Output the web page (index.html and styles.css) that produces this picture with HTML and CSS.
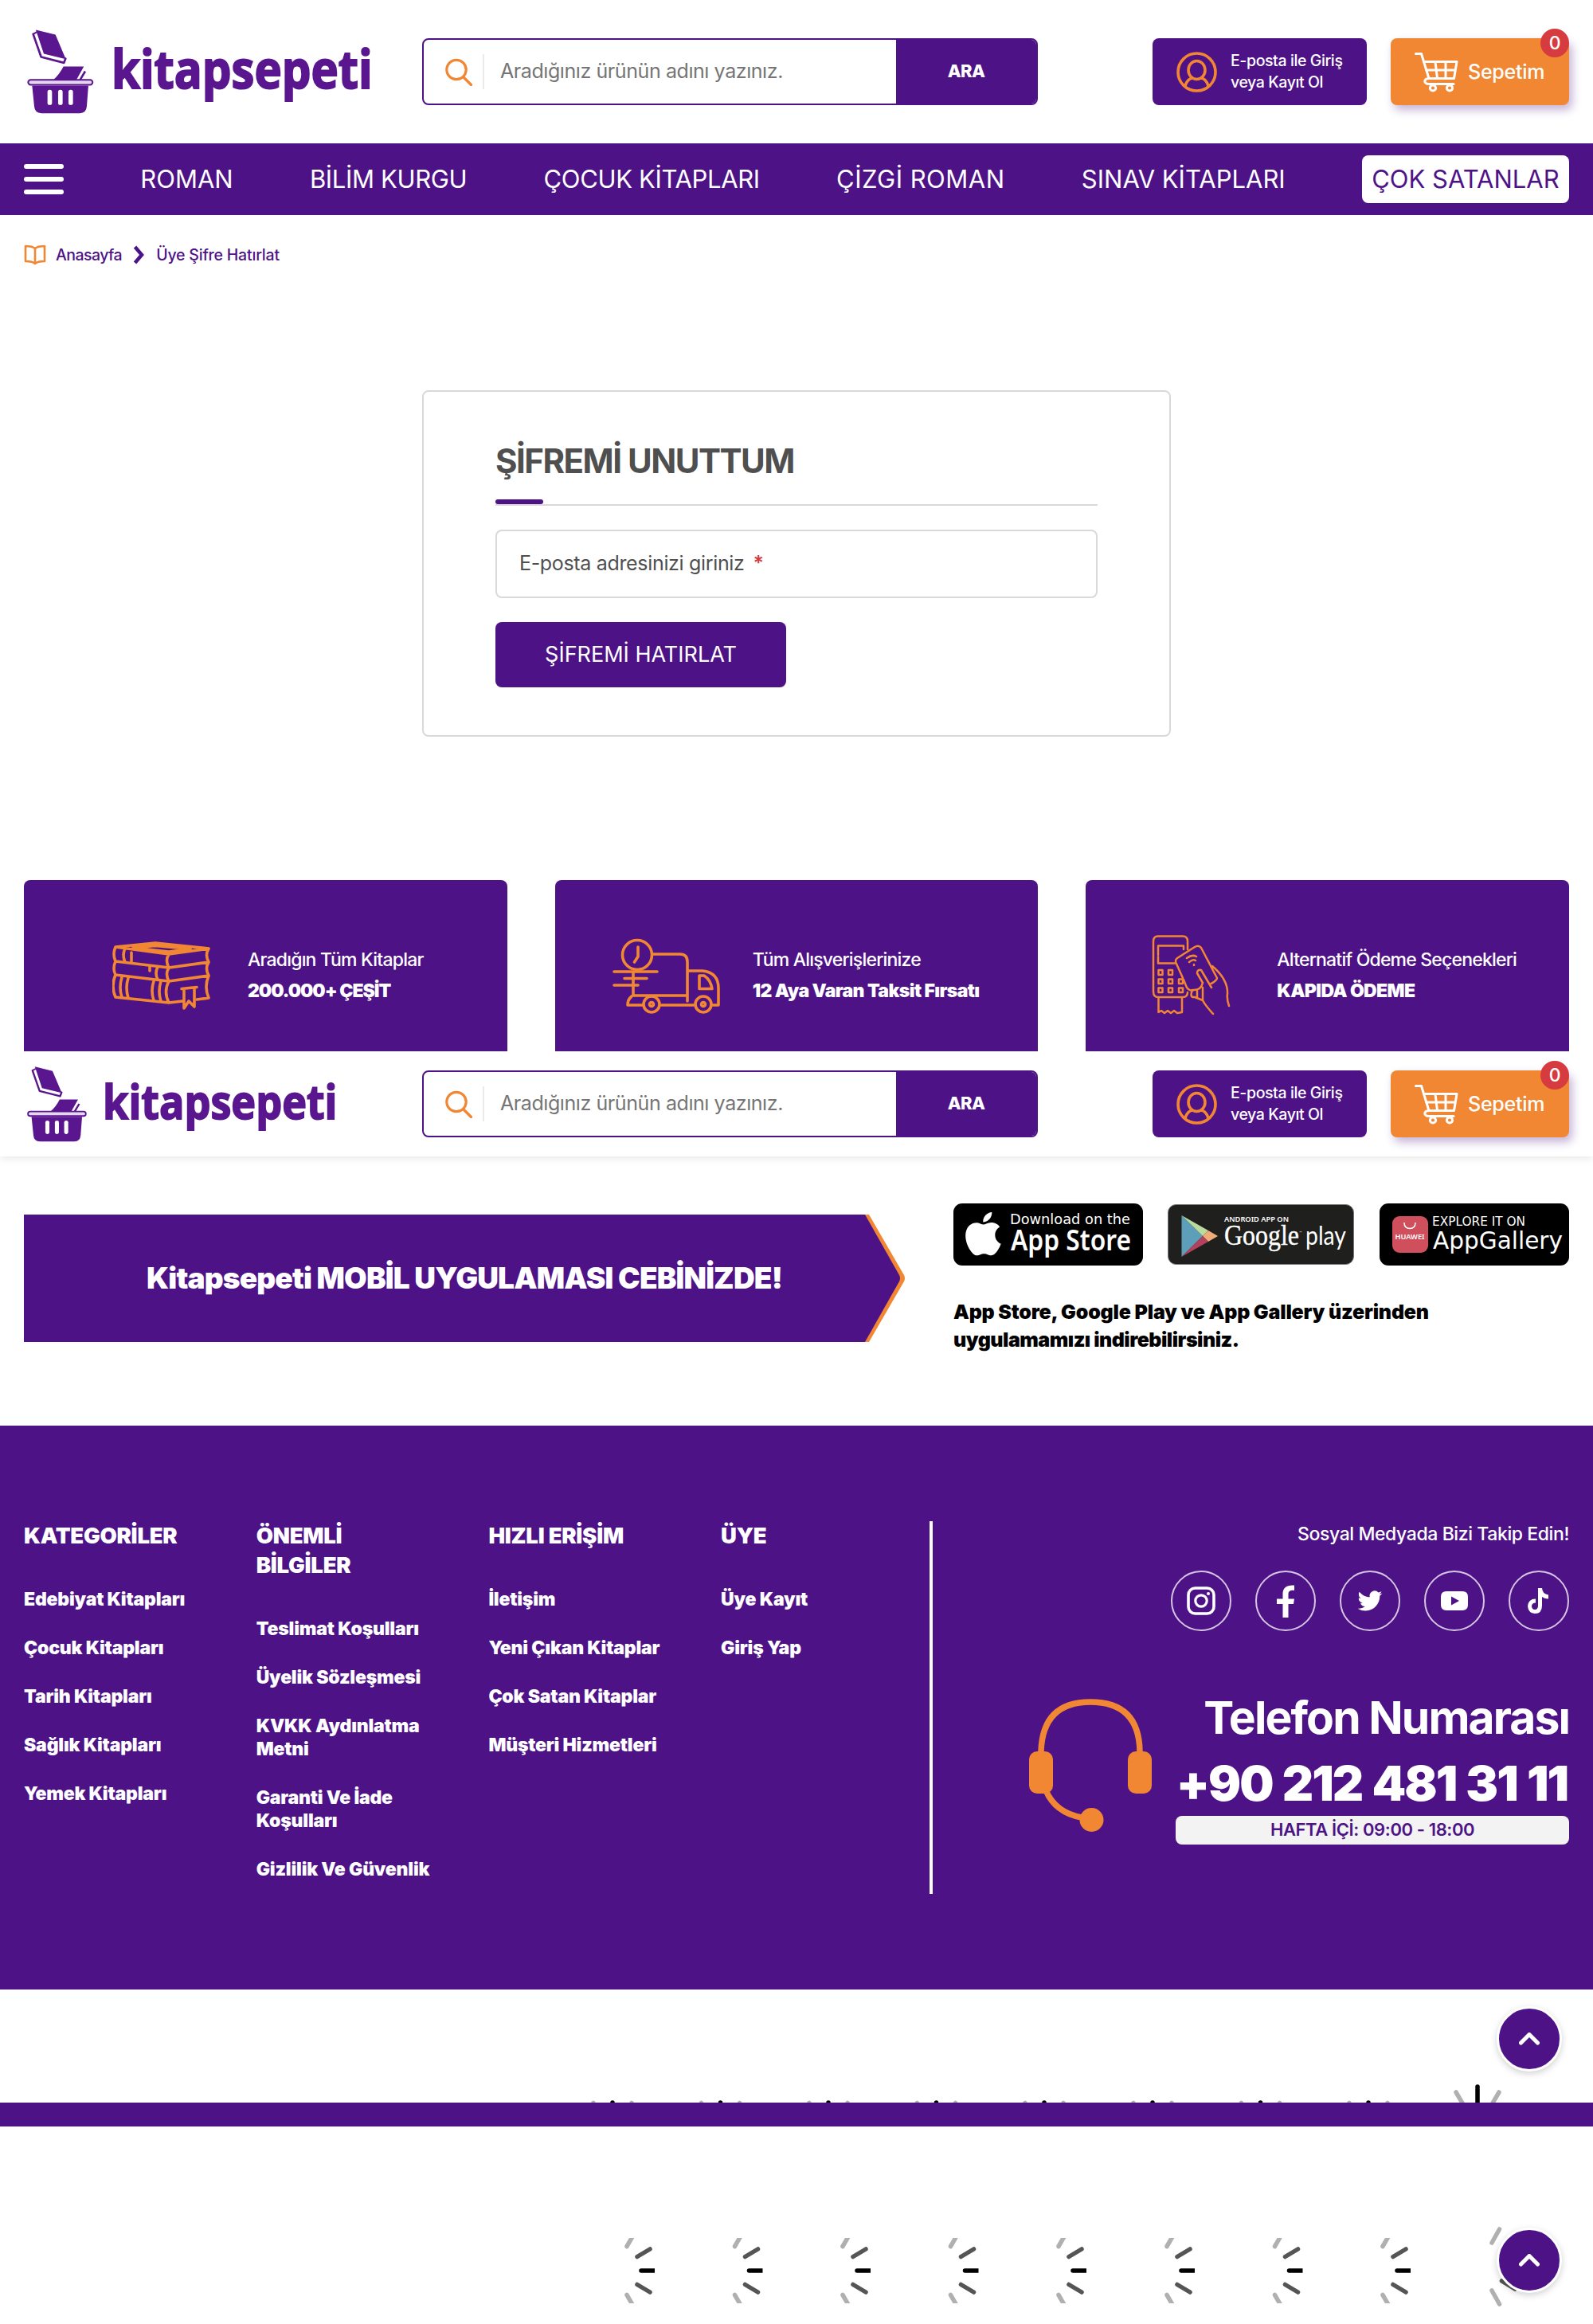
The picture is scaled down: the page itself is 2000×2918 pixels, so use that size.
FILE: index.html
```html
<!DOCTYPE html>
<html lang="tr">
<head>
<meta charset="utf-8">
<title>Üye Şifre Hatırlat - Kitapsepeti</title>
<link rel="stylesheet" href="styles.css">
</head>
<body>
<svg class="defs" aria-hidden="true">
  <symbol id="logo" viewBox="40 48 1300 320">
    <path d="M76 52L150 70L189 162L106 142Z"/>
    <path d="M66 68L96 154L182 176L188 160" fill="none" stroke="currentColor" stroke-width="8" stroke-linejoin="round" stroke-linecap="round"/>
    <path d="M66 68L80 60" stroke="currentColor" stroke-width="6"/>
    <path d="M180 190H257L229 240H142Q165 220 180 190Z"/>
    <path d="M262 208L243 240" stroke="currentColor" stroke-width="8"/>
    <rect x="47" y="240" width="243" height="19" rx="9.500" fill="#e4d6ee" stroke="currentColor" stroke-width="6"/>
    <path d="M62 262H274L268 340Q266 366 242 366H97Q72 366 70 340Z"/>
    <rect x="120" y="278" width="17" height="57" rx="8" fill="#fff"/>
    <rect x="160" y="278" width="17" height="57" rx="8" fill="#fff"/>
    <rect x="199" y="278" width="17" height="57" rx="8" fill="#fff"/>
    <text x="361" y="273" textLength="984" lengthAdjust="spacingAndGlyphs" class="logo-text">kitapsepeti</text>
  </symbol>
  <symbol id="search" viewBox="558 71 36 36">
    <circle cx="573" cy="86.500" r="12.200"/><path d="M582 96L591.500 105.500"/>
  </symbol>
  <symbol id="user" viewBox="1477 64 51 51">
    <circle cx="1502.500" cy="89.500" r="23.500"/><ellipse cx="1502.500" cy="87" rx="10.500" ry="11.500"/><path d="M1488 107Q1491 97 1498 97M1517 107Q1514 97 1507 97"/>
  </symbol>
  <symbol id="cart" viewBox="1775 63 56 52">
    <path d="M1777.500 66.500H1784.500L1794 97.500H1825.500L1829 76.500H1788M1802 77L1804.500 97M1815 77V97M1790.500 87H1827M1794 97.500Q1788 98 1789 102Q1790 104.500 1794 104.500H1825"/>
    <circle cx="1799" cy="109.500" r="3.600"/><circle cx="1820" cy="109.500" r="3.600"/>
  </symbol>
  <symbol id="up" viewBox="0 0 26 16"><path d="M2.500 13L13 2.500L23.500 13"/></symbol>
</svg>

<header class="header">
  <svg class="logo"><use href="#logo"/></svg>
  <form class="search">
    <svg class="search-icon"><use href="#search"/></svg>
    <span class="search-hint">Aradığınız ürünün adını yazınız.</span>
    <span class="search-btn">ARA</span>
  </form>
  <div class="actions">
    <a class="login"><svg><use href="#user"/></svg><span>E-posta ile Giriş<br>veya Kayıt Ol</span></a>
    <a class="cart"><svg><use href="#cart"/></svg><span>Sepetim</span><b class="badge">0</b></a>
  </div>
</header>

<nav class="nav">
  <span class="burger"><i></i><i></i><i></i></span>
  <a>ROMAN</a><a class="tight">BİLİM KURGU</a><a class="tight">ÇOCUK KİTAPLARI</a><a class="wide">ÇİZGİ ROMAN</a><a>SINAV KİTAPLARI</a><a class="hot">ÇOK SATANLAR</a>
</nav>

<main class="main">
  <div class="crumbs">
    <svg class="crumb-book" viewBox="0 0 28 26"><path d="M14 5Q11 2 2 2V21Q11 21 14 24Q17 21 26 21V2Q17 2 14 5ZM14 5V24"/></svg>
    <a class="home">Anasayfa</a>
    <svg class="crumb-arrow" viewBox="0 0 14 24"><path d="M2.500 2L11 12L2.500 22"/></svg>
    <a>Üye Şifre Hatırlat</a>
  </div>
  <section class="card">
    <h1>ŞİFREMİ UNUTTUM</h1>
    <div class="field"><span>E-posta adresinizi giriniz</span><em>*</em></div>
    <span class="submit">ŞİFREMİ HATIRLAT</span>
  </section>
</main>

<section class="features">
  <div class="feature f-books">
    <svg viewBox="141 1180 124 90">
      <path d="M145 1189L195 1184L262 1191L212 1198ZM167 1190L195 1187.500L239 1191.500L212 1195ZM145 1189Q141 1198 145 1207L212 1215L262 1208Q257 1199 262 1191M212 1198Q207 1206 212 1215M145 1207Q141 1216 145 1224L212 1232L262 1225Q257 1216 262 1208M212 1215Q207 1223 212 1232M145 1224Q139 1238 145 1252L212 1259L229 1257M247 1255L262 1253Q256 1239 262 1225M212 1232Q205 1245 212 1259"/>
      <path d="M157 1191Q153 1199 157 1208M165 1196V1207M188 1214V1219M198 1214Q194 1222 198 1230M153 1227Q149 1240 153 1252M161 1228Q157 1240 161 1253M193 1232Q189 1244 193 1256M202 1232Q198 1245 202 1257M228 1241.500L247 1239.500M231 1242V1266L237 1257L244 1264V1240"/>
    </svg>
    <p>Aradığın Tüm Kitaplar<b>200.000+ ÇEŞİT</b></p>
  </div>
  <div class="feature f-truck">
    <svg viewBox="768 1176 138 96">
      <circle cx="800" cy="1198" r="18.500"/><path d="M801 1188V1200L796.500 1207M771 1219H825M784 1227.500H812M771 1236H801M820 1197H854Q863 1197 863 1207V1256M795 1219V1249H863M793 1250Q788 1254 788 1261H807M830 1261H871M863 1218H882Q902 1220 902 1240V1261H895M878 1224H884Q892 1229 894 1240.500H878Z"/>
      <circle cx="818" cy="1260" r="10"/><circle cx="818" cy="1260" r="2.500"/><circle cx="883" cy="1260" r="10"/><circle cx="883" cy="1260" r="2.500"/>
    </svg>
    <p>Tüm Alışverişlerinize<b>12 Aya Varan Taksit Fırsatı</b></p>
  </div>
  <div class="feature f-pay">
    <svg viewBox="1445 1173 101 103">
      <path d="M1491 1192V1182Q1491 1175.500 1485 1175.500H1454Q1448 1175.500 1448 1182V1245Q1448 1252 1454 1252H1485Q1491 1252 1491 1246M1454 1199V1187.500H1486V1192M1454 1201V1209.500H1475M1454.500 1253V1271L1458 1269L1462 1272L1466 1269L1470 1272L1474 1269L1478 1272L1484 1271V1253"/>
      <path d="M1454.500 1218H1459.500V1224H1454.500ZM1467 1218H1472V1224H1467ZM1454.500 1229.500H1459.500V1235H1454.500ZM1467 1229.500H1472V1235H1467ZM1480 1229.500H1485V1235H1480ZM1454.500 1240.500H1459.500V1246H1454.500ZM1467 1240.500H1472V1246H1467ZM1480 1240.500H1485V1246H1480Z"/>
      <path d="M1485 1228L1476.500 1209Q1475 1205 1478 1203L1500 1189Q1505 1186 1508 1190L1528 1228Q1528 1231 1519 1236M1486 1230L1490 1240Q1494 1245 1499 1243Q1508 1243 1510 1234L1503 1222Q1503 1217 1508 1218L1521 1240M1522 1213Q1542 1230 1541 1248Q1540 1254 1543 1263M1497 1243Q1493 1253 1500 1252L1510 1256Q1513 1262 1523 1273M1503 1244V1252M1510 1240V1256M1490 1203Q1497 1198 1502 1201M1493 1208Q1498 1204 1501 1206M1499 1211V1212"/>
    </svg>
    <p>Alternatif Ödeme Seçenekleri<b>KAPIDA ÖDEME</b></p>
  </div>
</section>

<header class="header sticky">
  <svg class="logo"><use href="#logo"/></svg>
  <form class="search">
    <svg class="search-icon"><use href="#search"/></svg>
    <span class="search-hint">Aradığınız ürünün adını yazınız.</span>
    <span class="search-btn">ARA</span>
  </form>
  <div class="actions">
    <a class="login"><svg><use href="#user"/></svg><span>E-posta ile Giriş<br>veya Kayıt Ol</span></a>
    <a class="cart"><svg><use href="#cart"/></svg><span>Sepetim</span><b class="badge">0</b></a>
  </div>
</header>

<section class="apps">
  <div class="banner">
    <div class="banner-text"><span>Kitapsepeti MOBİL UYGULAMASI CEBİNİZDE!</span></div>
    <svg class="banner-tip" viewBox="0 0 50 160"><path d="M0 0H5L49 76Q51 80 49 84L5 160H0Z" fill="#f18733"/><path d="M0 0L43 76Q45 80 43 84L0 160Z" fill="#4e1287"/></svg>
  </div>
  <div class="stores">
    <div class="store-row">
      <svg width="238" height="78" viewBox="1197 1511 238 78">
        <rect x="1197" y="1511" width="238" height="78" rx="11"/>
        <g transform="translate(1208 1520.500) scale(2.420)"><path fill="#fff" d="M17.050 12.540c-.03-2.850 2.330-4.220 2.430-4.280-1.320-1.940-3.380-2.200-4.120-2.230-1.750-.18-3.420 1.030-4.310 1.030-.89 0-2.260-1.010-3.710-.98-1.910.03-3.670 1.110-4.660 2.820-1.980 3.440-.51 8.540 1.420 11.330.95 1.370 2.080 2.900 3.560 2.850 1.430-.06 1.970-.92 3.700-.92 1.720 0 2.210.92 3.720.89 1.540-.03 2.510-1.390 3.450-2.770 1.090-1.590 1.530-3.130 1.560-3.210-.03-.01-2.990-1.150-3.040-4.530zM14.210 4.170c.79-.95 1.320-2.280 1.170-3.600-1.130.05-2.500.75-3.310 1.700-.73.84-1.370 2.190-1.200 3.490 1.270.1 2.550-.64 3.340-1.590z"/></g>
        <text x="1268" y="1537" textLength="151" lengthAdjust="spacingAndGlyphs" class="st dj" font-size="17">Download on the</text>
        <text x="1269" y="1569.500" textLength="151" lengthAdjust="spacingAndGlyphs" class="st no" font-size="36">App Store</text>
      </svg>
      <svg class="play" width="234" height="76" viewBox="1466 1512 234 76">
        <rect x="1466.500" y="1512.500" width="233" height="75" rx="10" fill="#1f1f1d" stroke="#777"/>
        <path d="M1483.500 1526L1510 1552L1483.500 1578Z" fill="#5d9fb9"/><path d="M1483.500 1526L1517 1545L1510 1552Z" fill="#b9dba0"/><path d="M1517 1545L1529 1552L1517 1559L1510 1552Z" fill="#efab78"/><path d="M1510 1552L1517 1559L1483.500 1578Z" fill="#b4425c"/>
        <text x="1537" y="1534" textLength="81" lengthAdjust="spacingAndGlyphs" class="st nb" font-size="9.500">ANDROID APP ON</text>
        <text x="1537" y="1563" textLength="94" lengthAdjust="spacingAndGlyphs" class="st se" font-size="35">Google</text>
        <text x="1631" y="1549" font-size="4" class="st dj">™</text>
        <text x="1639" y="1563" textLength="51" lengthAdjust="spacingAndGlyphs" class="st la" font-size="32">play</text>
      </svg>
      <svg width="238" height="78" viewBox="1732 1511 238 78">
        <rect x="1732" y="1511" width="238" height="78" rx="11"/>
        <rect x="1748" y="1527" width="45" height="46" rx="9" fill="#cf505c"/>
        <path d="M1763 1535Q1763 1542.500 1770 1542.500Q1777 1542.500 1777 1535" fill="none" stroke="#fff" stroke-width="1.500"/>
        <text x="1751.500" y="1556" textLength="37" lengthAdjust="spacingAndGlyphs" class="st nb" font-size="9">HUAWEI</text>
        <text x="1798" y="1539" textLength="117" lengthAdjust="spacingAndGlyphs" class="st dj" font-size="15.500">EXPLORE IT ON</text>
        <text x="1799" y="1568" textLength="163" lengthAdjust="spacingAndGlyphs" class="st dj" font-size="30">AppGallery</text>
      </svg>
    </div>
    <p><span>App Store, Google Play ve App Gallery üzerinden</span><br><span class="second">uygulamamızı indirebilirsiniz.</span></p>
  </div>
</section>

<footer class="footer">
  <div class="col"><h2>KATEGORİLER</h2><a>Edebiyat Kitapları</a><a>Çocuk Kitapları</a><a>Tarih Kitapları</a><a>Sağlık Kitapları</a><a>Yemek Kitapları</a></div>
  <div class="col"><h2>ÖNEMLİ<br>BİLGİLER</h2><a>Teslimat Koşulları</a><a>Üyelik Sözleşmesi</a><a>KVKK Aydınlatma<br>Metni</a><a>Garanti Ve İade<br>Koşulları</a><a>Gizlilik Ve Güvenlik</a></div>
  <div class="col"><h2>HIZLI ERİŞİM</h2><a>İletişim</a><a>Yeni Çıkan Kitaplar</a><a>Çok Satan Kitaplar</a><a>Müşteri Hizmetleri</a></div>
  <div class="col"><h2>ÜYE</h2><a>Üye Kayıt</a><a>Giriş Yap</a></div>
  <div class="contact">
    <p class="follow">Sosyal Medyada Bizi Takip Edin!</p>
    <div class="social">
      <a><svg viewBox="0 0 36 36"><rect x="2" y="2" width="32" height="32" rx="8.500" fill="none" stroke="#fff" stroke-width="3.600"/><circle cx="18" cy="18" r="7.200" fill="none" stroke="#fff" stroke-width="3.200"/><circle cx="27" cy="9" r="2"/></svg></a>
      <a><svg viewBox="0 0 36 36"><path d="M14.500 39V22H7V15.500H14.500V9Q14.500 -2.500 29 -1.500V5Q21.500 4 21.500 9.500V15.500H29L28 22H21.500V39Z"/></svg></a>
      <a><svg viewBox="-2 -2 28 28"><path d="M23.950 4.570a10 10 0 0 1-2.820.77 4.960 4.960 0 0 0 2.160-2.720c-.95.550-2 .950-3.120 1.180a4.920 4.920 0 0 0-8.380 4.480C7.690 8.090 4.070 6.130 1.640 3.160a4.820 4.820 0 0 0-.66 2.480c0 1.710.87 3.210 2.190 4.100a4.900 4.900 0 0 1-2.230-.62v.06a4.920 4.920 0 0 0 3.950 4.830 5 5 0 0 1-2.210.08 4.940 4.940 0 0 0 4.600 3.420A9.870 9.870 0 0 1 0 19.540a13.990 13.990 0 0 0 7.550 2.210c9.050 0 14-7.500 14-13.980 0-.21 0-.42-.02-.63a9.940 9.940 0 0 0 2.460-2.550z"/></svg></a>
      <a><svg viewBox="0 0 36 36"><path fill-rule="evenodd" d="M8 6H28Q35 6 35 13V23Q35 30 28 30H8Q1 30 1 23V13Q1 6 8 6ZM14 12.500V23.500L24 18Z"/></svg></a>
      <a><svg viewBox="0 0 36 36"><path d="M17 2H22Q22.500 9.500 30 10.500V15.500Q25.500 15.500 22 13V24Q22 34 13 34Q5 33.500 4 25Q4.500 15.500 14 15.500V20.500Q9 20.500 9 25Q9.500 29 13 29Q17 29 17 24Z"/></svg></a>
    </div>
    <div class="phone">
      <svg viewBox="1291 2132 156 169"><path d="M1307 2203V2199Q1309 2137 1369 2137Q1430 2137 1431 2199V2203M1313 2248Q1325 2276 1358 2282" fill="none" stroke="#f18733" stroke-width="7.500"/><rect x="1292" y="2199" width="30" height="53" rx="10"/><rect x="1416" y="2199" width="30" height="53" rx="10"/><circle cx="1370.500" cy="2285" r="15"/></svg>
      <div class="phone-text">
        <span class="phone-label">Telefon Numarası</span>
        <span class="phone-number">+90 212 481 31 11</span>
        <span class="hours">HAFTA İÇİ: 09:00 - 18:00</span>
      </div>
    </div>
  </div>
</footer>

<section class="strip">
  <svg class="spin-row" viewBox="0 2498 2000 142">
    <defs>
      <g id="top-small"><path d="M53 2640V2650" stroke="#000"/><path d="M29 2640.500L36 2653M77 2640.500L70 2653" stroke="#b0b0b0"/></g>
    </defs>
    <use href="#top-small" x="716"/><use href="#top-small" x="851.500"/><use href="#top-small" x="987"/><use href="#top-small" x="1122.500"/><use href="#top-small" x="1258"/><use href="#top-small" x="1394"/><use href="#top-small" x="1529.500"/><use href="#top-small" x="1665"/>
    <path d="M1855 2620V2650" stroke="#000"/><path d="M1828 2627L1838 2644M1882 2627L1872 2644" stroke="#b0b0b0"/>
  </svg>
  <span class="to-top"><svg><use href="#up"/></svg></span>
</section>
<div class="bar"></div>
<section class="strip loaders">
  <svg class="spin-row" viewBox="0 2670 2000 248">
    <defs>
      <clipPath id="cell"><rect x="0" y="2810" width="106" height="82"/></clipPath>
      <g id="side-small" clip-path="url(#cell)"><path d="M89 2851H112" stroke="#000"/><path d="M84 2833.500L100 2824M84 2868.500L100 2878" stroke="#555"/><path d="M71 2820.500L80 2805M71 2881.500L80 2897" stroke="#b0b0b0"/></g>
    </defs>
    <use href="#side-small" x="716"/><use href="#side-small" x="851.500"/><use href="#side-small" x="987"/><use href="#side-small" x="1122.500"/><use href="#side-small" x="1258"/><use href="#side-small" x="1394"/><use href="#side-small" x="1529.500"/><use href="#side-small" x="1665"/>
    <path d="M1873 2816L1882.500 2799M1873 2876L1882.500 2893" stroke="#b0b0b0"/><path d="M1885.500 2864L1902 2874" stroke="#555"/>
  </svg>
  <span class="to-top"><svg><use href="#up"/></svg></span>
</section>
</body>
</html>
```
FILE: styles.css
```css
* { box-sizing: border-box; }
body { margin: 0; width: 2000px; background: #fff; font-family: Inter, "Liberation Sans", sans-serif; color: #4f4f4f; }
p, h1, h2 { margin: 0; }
.defs { position: absolute; width: 0; height: 0; }

.header { display: grid; grid-template-columns: 500px 773px 1fr; height: 180px; padding: 48px 30px 0; background: #fff; }
.logo { width: 433px; height: 107px; margin: -12px 0 0 3px; color: #5a168e; fill: #5a168e; }
.logo-text { font-family: "Open Sans", sans-serif; font-weight: 700; font-size: 197px; stroke: #5a168e; stroke-width: 6px; }
.search { display: flex; align-items: center; height: 84px; border: 2px solid #4e1287; border-radius: 8px; overflow: hidden; }
.search-icon { width: 36px; height: 36px; margin-left: 26px; fill: none; stroke: #f18733; stroke-width: 3.200; stroke-linecap: round; }
.search-hint { flex: 1; height: 44px; margin-left: 12px; padding-left: 20px; border-left: 2px solid #eaeaea; font-size: 25px; line-height: 43px; letter-spacing: -.42px; color: #757575; }
.search-btn { width: 176px; height: 84px; background: #4e1287; color: #fff; font-size: 22px; font-weight: 800; line-height: 82px; letter-spacing: -.7px; text-align: center; }
.actions { display: flex; justify-content: flex-end; gap: 30px; color: #fff; }
.login, .cart { display: flex; align-items: center; height: 84px; border-radius: 8px; font-weight: 500; }
.login { width: 269px; padding-left: 30px; gap: 17px; background: #4e1287; font-size: 19.500px; line-height: 27px; letter-spacing: -.4px; white-space: nowrap; }
.login svg { width: 51px; height: 51px; fill: none; stroke: #f18733; stroke-width: 3.600; }
.cart { position: relative; width: 224px; padding-left: 29px; gap: 12px; background: #f18733; font-size: 25px; letter-spacing: -.25px; box-shadow: 4px 6px 12px rgba(78, 18, 135, .32); }
.cart svg { width: 56px; height: 52px; fill: none; stroke: #fff; stroke-width: 3; stroke-linejoin: round; stroke-linecap: round; }
.badge { position: absolute; top: -12px; right: 0; width: 36px; height: 36px; border-radius: 50%; background: #d53b3f; font-size: 23px; font-weight: 500; line-height: 36px; text-align: center; }

.nav { display: flex; align-items: center; justify-content: space-between; height: 90px; padding: 0 30px; background: #4e1287; color: #fff; font-size: 31px; line-height: 60px; letter-spacing: 0; white-space: nowrap; }
.nav .tight { letter-spacing: -.35px; }
.nav .wide { letter-spacing: .5px; }
.burger { display: grid; gap: 10px; width: 50px; }
.burger i { height: 6px; border-radius: 3px; background: #fff; }
.hot { width: 260px; border-radius: 8px; background: #fff; color: #4e1287; text-align: center; }

.main { height: 835px; padding: 30px 30px 0; }
.crumbs { display: flex; align-items: center; height: 40px; color: #4e1287; font-size: 19.500px; font-weight: 500; letter-spacing: -.2px; white-space: nowrap; }
.home { letter-spacing: -.55px; }
.crumb-book { width: 28px; height: 26px; margin-right: 12px; fill: none; stroke: #f18733; stroke-width: 2.600; stroke-linejoin: round; }
.crumb-arrow { width: 14px; height: 24px; margin: 0 15px 0 14px; fill: none; stroke: #4e1287; stroke-width: 4.500; }
.card { width: 940px; height: 435px; margin: 150px auto 0; padding: 50px 90px 0; border: 2px solid #d9d9d9; border-radius: 8px; }
.card h1 { height: 93px; border-bottom: 2px solid #d9d9d9; font-size: 42px; line-height: 73px; letter-spacing: -1.500px; white-space: nowrap; }
.card h1::after { content: ""; display: block; width: 60px; height: 6px; margin-top: 12px; border-radius: 3px; background: #4e1287; }
.field { display: flex; gap: 11px; height: 86px; margin-top: 30px; padding-left: 28px; border: 2px solid #d9d9d9; border-radius: 8px; font-size: 25px; line-height: 81px; letter-spacing: -.33px; }
.field em { color: #d53b3f; font-style: normal; font-weight: 600; }
.submit { display: block; width: 365px; height: 82px; margin-top: 30px; border-radius: 8px; background: #4e1287; color: #fff; font-size: 27px; line-height: 82px; letter-spacing: 0; text-align: center; white-space: nowrap; }

.features { display: grid; grid-template-columns: repeat(3, 1fr); gap: 60px; height: 215px; padding: 0 30px; }
.feature { display: flex; align-items: center; padding-top: 24px; border-radius: 8px 8px 0 0; background: #4e1287; color: #fff; font-size: 23px; font-weight: 500; line-height: 39px; letter-spacing: -.8px; white-space: nowrap; }
.feature svg { fill: none; stroke: #f18733; stroke-width: 3.600; stroke-linejoin: round; stroke-linecap: round; }
.feature b { display: block; font-weight: 900; letter-spacing: -.62px; }
.f-books b { letter-spacing: -1px; }
.f-books { padding-left: 111px; gap: 46px; }
.f-books svg { width: 124px; height: 90px; }
.f-truck { padding-left: 71px; gap: 39px; }
.f-truck svg { width: 138px; height: 96px; }
.f-pay { padding-left: 82px; gap: 57px; }
.f-pay svg { width: 101px; height: 103px; stroke-width: 2.500; }

.sticky { position: relative; height: 132px; padding-top: 24px; box-shadow: 0 2px 10px rgba(0, 0, 0, .1); clip-path: inset(0 0 -20px 0); }
.sticky .logo { width: 389px; height: 96px; margin-top: -6px; }

.apps { display: grid; grid-template-columns: 1106px 773px; column-gap: 61px; height: 338px; padding: 0 30px; }
.banner { display: flex; height: 160px; margin-top: 73px; }
.banner-text { width: 1056px; padding-left: 50px; background: #4e1287; color: #fff; font-size: 37px; font-weight: 900; line-height: 160px; letter-spacing: -.84px; text-align: center; white-space: nowrap; }
.banner-tip { width: 50px; height: 160px; }
.stores { padding-top: 59px; color: #000; }
.store-row { display: flex; justify-content: space-between; align-items: center; height: 78px; }
.play { margin-right: 2px; }
.stores p { margin-top: 41px; font-size: 25px; font-weight: 900; line-height: 35px; letter-spacing: -.2px; white-space: nowrap; }
.stores .second { letter-spacing: -.53px; }
.st { fill: #fff; }
.dj { font-family: "DejaVu Sans", sans-serif; }
.no { font-family: "Noto Sans", sans-serif; font-weight: 600; }
.nb { font-family: "Noto Sans", sans-serif; font-weight: 600; }
.se { font-family: "Liberation Serif", serif; stroke: #fff; stroke-width: .4px; }
.la { font-family: Lato, sans-serif; font-weight: 400; }

.footer { display: grid; grid-template-columns: 291.700px 291.700px 291.700px 262px 803px; height: 708px; padding: 120px 30px 0; background: #4e1287; color: #fff; }
.col { display: flex; flex-direction: column; gap: 32px; font-size: 23px; font-weight: 900; line-height: 29px; letter-spacing: -.2px; white-space: nowrap; }
.col h2 { margin-bottom: 15px; font-size: 27.500px; font-weight: 900; line-height: 37px; letter-spacing: -.25px; }
.contact { display: flex; flex-direction: column; align-items: flex-end; height: 468px; border-left: 4px solid #fff; }
.follow { font-size: 23px; font-weight: 500; line-height: 32px; letter-spacing: -.4px; }
.social { display: flex; gap: 30px; margin-top: 30px; }
.social a { display: grid; place-items: center; width: 76px; height: 76px; border: 2.500px solid #d5c5e3; border-radius: 50%; }
.social svg { width: 36px; height: 36px; overflow: visible; fill: #fff; }
.phone { display: flex; gap: 29px; margin-top: 68px; }
.phone > svg { width: 156px; height: 169px; margin-top: 16px; fill: #f18733; }
.phone-text { display: flex; flex-direction: column; width: 494px; text-align: right; white-space: nowrap; }
.phone-label { font-size: 57px; font-weight: 700; line-height: 82px; letter-spacing: -1.900px; }
.phone-number { padding-right: 2px; font-size: 61px; font-weight: 900; line-height: 82px; letter-spacing: -2px; word-spacing: 2px; }
.hours { height: 36px; border-radius: 8px; background: #f3f3f3; color: #4e1287; font-size: 22px; font-weight: 600; line-height: 35px; letter-spacing: -.4px; text-align: center; }

.strip { position: relative; height: 142px; overflow: hidden; }
.loaders { height: 248px; }
.spin-row { display: block; width: 2000px; height: 100%; fill: none; stroke-width: 5.500; stroke-linecap: round; }
.to-top { position: absolute; top: 21px; right: 39px; display: grid; place-items: center; width: 82px; height: 82px; border: 3px solid #fff; border-radius: 50%; background: #4e1287; box-shadow: 0 3px 8px rgba(0, 0, 0, .18); }
.loaders .to-top { top: 127px; }
.to-top svg { width: 26px; height: 16px; fill: none; stroke: #fff; stroke-width: 5; stroke-linecap: round; stroke-linejoin: round; }
.bar { height: 30px; background: #4e1287; }
```
